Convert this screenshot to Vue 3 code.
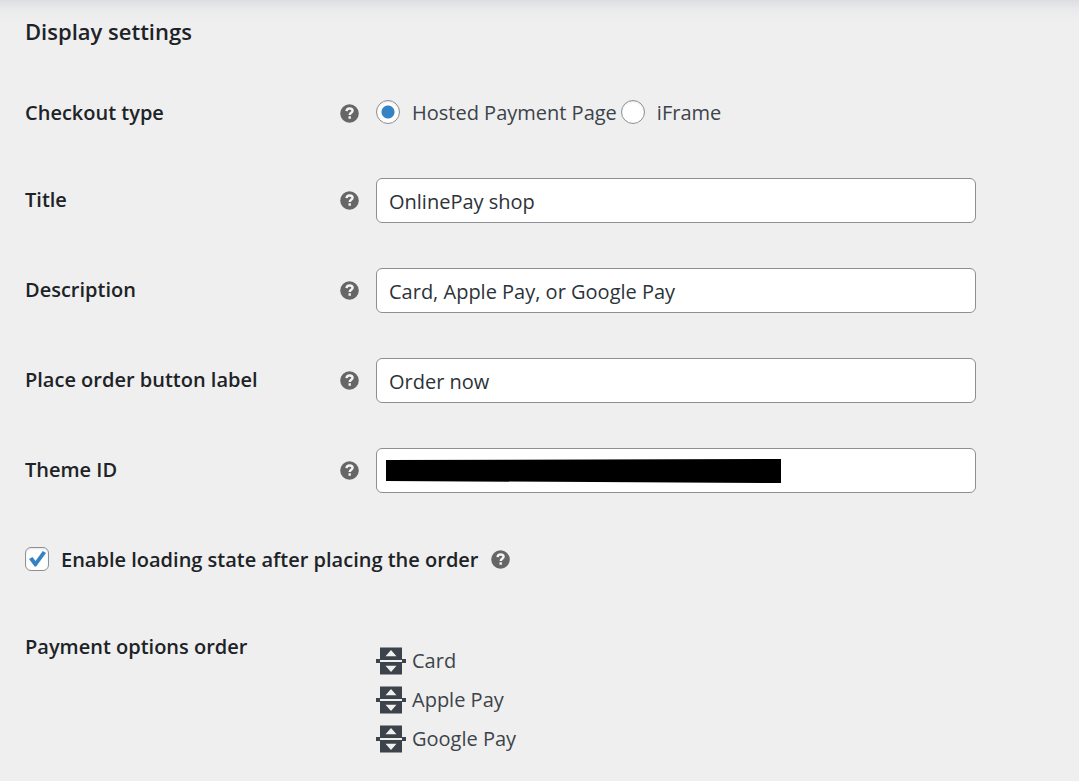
<script setup>
import { ref } from 'vue'

const checkoutType = ref('hosted')
const loadingState = ref(true)
const fields = ref([
  { id: 'title', label: 'Title', value: 'OnlinePay shop' },
  { id: 'description', label: 'Description', value: 'Card, Apple Pay, or Google Pay' },
  { id: 'order-label', label: 'Place order button label', value: 'Order now' },
  { id: 'theme-id', label: 'Theme ID', value: '', redacted: true }
])
const options = ['Card', 'Apple Pay', 'Google Pay']
</script>

<template>
  <main class="settings">
    <h2 class="heading">Display settings</h2>

    <div class="row" role="radiogroup" aria-labelledby="checkout-type">
      <span id="checkout-type" class="label">Checkout type</span>
      <svg class="help" viewBox="0 0 18 18" aria-hidden="true">
        <circle cx="9" cy="9" r="8.8" />
        <path d="M6.2 6.8C6.3 5.1 7.5 4.3 9.1 4.3C10.8 4.3 11.9 5.2 11.9 6.5C11.9 8.3 9.2 8.4 9.2 10.4M9.2 11.7V13.9" />
      </svg>
      <div class="radios">
        <input id="hosted" v-model="checkoutType" type="radio" name="checkout" value="hosted" />
        <label for="hosted">Hosted Payment Page</label>
        <input id="iframe" v-model="checkoutType" type="radio" name="checkout" value="iframe" />
        <label for="iframe">iFrame</label>
      </div>
    </div>

    <div v-for="field in fields" :key="field.id" class="row field-row">
      <label class="label" :for="field.id">{{ field.label }}</label>
      <svg class="help" viewBox="0 0 18 18" aria-hidden="true">
        <circle cx="9" cy="9" r="8.8" />
        <path d="M6.2 6.8C6.3 5.1 7.5 4.3 9.1 4.3C10.8 4.3 11.9 5.2 11.9 6.5C11.9 8.3 9.2 8.4 9.2 10.4M9.2 11.7V13.9" />
      </svg>
      <div class="control">
        <input :id="field.id" v-model="field.value" class="text" type="text" />
        <span v-if="field.redacted" class="redaction"></span>
      </div>
    </div>

    <div class="check-row">
      <input id="loading" v-model="loadingState" type="checkbox" />
      <label class="label" for="loading">Enable loading state after placing the order</label>
      <svg class="help" viewBox="0 0 18 18" aria-hidden="true">
        <circle cx="9" cy="9" r="8.8" />
        <path d="M6.2 6.8C6.3 5.1 7.5 4.3 9.1 4.3C10.8 4.3 11.9 5.2 11.9 6.5C11.9 8.3 9.2 8.4 9.2 10.4M9.2 11.7V13.9" />
      </svg>
    </div>

    <div class="row order-row">
      <span class="label">Payment options order</span>
      <ul class="options">
        <li v-for="option in options" :key="option">
          <svg class="handle" viewBox="0 0 30 28" aria-hidden="true">
            <path class="block" d="M4 0.5H26V12H30V16H26V27.5H4V16H0V12H4Z" />
            <path class="mark" d="M15 3L20.5 9.3H9.5ZM15 25L20.5 18.7H9.5ZM4 13H26V15H4Z" />
          </svg>
          <span>{{ option }}</span>
        </li>
      </ul>
    </div>
  </main>
</template>

<style>
body {
  background: #efefef;
}
</style>

<style scoped>
.settings {
  display: flex;
  flex-direction: column;
  gap: 45px;
  padding: 16px 25px 22px;
  background: linear-gradient(#dcdee1 0, #e1e2e5 3px, #e9eaeb 9px, #eeeeee 18px, #efefef 26px);
  color: #3c434a;
  font-family: "Segoe UI", "Open Sans", "Noto Sans", sans-serif;
  font-size: 20px;
  line-height: 28px;
}

.heading {
  margin: 0 0 2px;
  color: #1d2327;
  font-size: 22px;
  font-weight: 600;
  line-height: 30px;
}

.row {
  display: grid;
  grid-template-columns: 315px 18px minmax(0, 618px);
  align-items: center;
  min-height: 40px;
}

.label {
  color: #1d2327;
  font-weight: 600;
}

.field-row .label {
  padding-bottom: 2px;
}

.help {
  width: 19px;
  height: 19px;
}

.help circle {
  fill: #666666;
}

.help path {
  fill: none;
  stroke: #f4f4f4;
  stroke-width: 2.3;
}

.radios {
  display: flex;
  align-items: center;
  margin-left: 18px;
}

.radios label {
  margin: 0 4px 0 12px;
}

input {
  box-sizing: border-box;
  margin: 0;
  border: 1px solid #8c8f94;
  background: #ffffff;
  appearance: none;
}

input[type="radio"],
input[type="checkbox"] {
  flex: none;
  width: 24px;
  height: 24px;
  margin-bottom: 2px;
  box-shadow: inset 0 1px 2px rgba(0, 0, 0, 0.1);
}

input[type="radio"] {
  border-radius: 50%;
}

input[type="radio"]:checked {
  background: radial-gradient(circle, #3582c4 6px, #ffffff 7px);
}

input[type="checkbox"] {
  border-radius: 6px;
}

input[type="checkbox"]:checked {
  background: #ffffff url("data:image/svg+xml,%3Csvg xmlns='http://www.w3.org/2000/svg' viewBox='0 0 22 22'%3E%3Cpath d='M3 11L6.5 9L9.5 13L16.8 3L20 5L10.2 18.5H8.6Z' fill='%233582c4'/%3E%3C/svg%3E") center / 22px 22px no-repeat;
}

.control {
  position: relative;
  margin-left: 18px;
}

.text {
  display: block;
  width: 100%;
  height: 45px;
  padding: 1px 12px 0;
  border-radius: 6px;
  color: #2c3338;
  font: inherit;
}

.redaction {
  position: absolute;
  top: 11px;
  left: 10px;
  width: 395px;
  height: 24px;
  background: #000000;
  clip-path: polygon(0 1px, 100% 0, 100% 100%, 0 22px);
}

.check-row {
  display: flex;
  align-items: center;
  min-height: 43px;
}

.check-row .label {
  margin: 0 12px;
}

.order-row {
  align-items: start;
}

.order-row .label {
  margin-top: 7px;
}

.options {
  grid-column: 3;
  margin: 15px 0 0 18px;
  padding: 0;
  list-style: none;
}

.options li {
  display: flex;
  align-items: center;
  gap: 6px;
  height: 39px;
}

.handle {
  width: 30px;
  height: 28px;
}

.block {
  fill: #3c434a;
}

.mark {
  fill: #f0f0f1;
}
</style>
